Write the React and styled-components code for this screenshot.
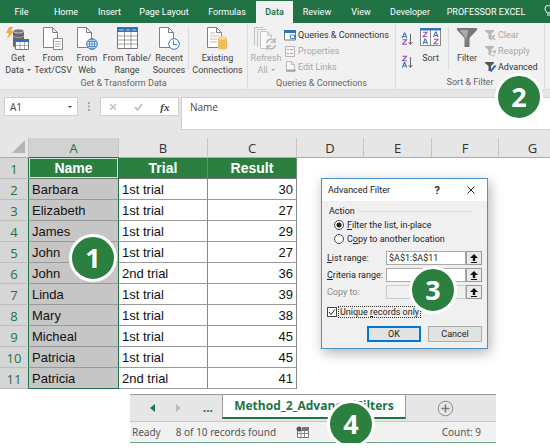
import React from "react";
import styled, { createGlobalStyle, css } from "styled-components";

const GlobalStyle = createGlobalStyle`
  * { box-sizing: border-box; }
  body { margin: 0; background: #fff; color: #444; font-family: Roboto, "Noto Sans", sans-serif; font-size: 9px; }
  button, input { font: inherit; color: inherit; margin: 0; }
  button { padding: 0; border: 0; background: none; }
`;

const Page = styled.main`
  overflow: hidden;
`;

/* Ribbon tabs */
const TabBar = styled.nav`
  display: flex;
  height: 23px;
  background: #217346;
  overflow: hidden;
`;
const RibbonTab = styled.button`
  flex: none;
  width: ${(p) => p.$w}px;
  margin-top: 1px;
  white-space: nowrap;
  color: ${(p) => (p.$active ? "#217346" : "#fff")};
  background: ${(p) => (p.$active ? "#f1f1f1" : "transparent")};
  font-weight: ${(p) => (p.$active ? 600 : 400)};
`;

/* Ribbon */
const Ribbon = styled.section`
  position: relative;
  display: flex;
  height: 67px;
  background: #f1f1f1;
  border-bottom: 1px solid #dadada;
`;
const Group = styled.div`
  flex: none;
  display: flex;
  flex-direction: column;
  width: ${(p) => p.$w}px;
  padding-top: 4px;
  border-right: 1px solid #dcdcdc;
`;
const GroupBody = styled.div`
  display: flex;
  height: 50px;
`;
const GroupLabel = styled.div`
  line-height: 14px;
  text-align: center;
  color: #666;
  white-space: nowrap;
`;
const BigButton = styled.button`
  flex: none;
  display: flex;
  flex-direction: column;
  align-items: center;
  width: ${(p) => p.$w}px;
  line-height: 12px;
  white-space: nowrap;
  color: ${(p) => (p.disabled ? "#a8a8a8" : "#444")};
  svg { display: block; margin-bottom: 1px; }
`;
const Divider = styled.div`
  flex: none;
  width: 1px;
  height: 43px;
  background: #dcdcdc;
`;
const SmallList = styled.div`
  display: flex;
  flex-direction: column;
`;
const SmallButton = styled.button`
  display: flex;
  align-items: center;
  gap: 2px;
  height: 16px;
  white-space: nowrap;
  color: ${(p) => (p.disabled ? "#a8a8a8" : "#333")};
`;
const IconButton = styled.button`
  height: 23px;
  padding-left: 6px;
  svg { display: block; }
`;
const Caret = styled.span`
  display: inline-block;
  margin-left: 3px;
  vertical-align: 2px;
  border: 2px solid transparent;
  border-top-color: currentColor;
  border-bottom: 0;
`;

/* Formula bar */
const FormulaBar = styled.section`
  display: flex;
  align-items: flex-start;
  height: 48px;
  padding: 7px 0 0 4px;
  background: #e6e6e6;
`;
const NameBox = styled.div`
  display: flex;
  align-items: center;
  justify-content: space-between;
  width: 74px;
  height: 19px;
  padding: 0 5px;
  background: #fff;
  border: 1px solid #d0d0d0;
  input { width: 40px; padding: 0; border: 0; font: 10px "Open Sans", sans-serif; outline: 0; }
`;
const Dots = styled.div`
  width: 22px;
  text-align: center;
  svg { margin-top: 5px; }
`;
const FxBox = styled.div`
  display: flex;
  align-items: center;
  justify-content: space-around;
  width: 79px;
  height: 19px;
  background: #fff;
  border: 1px solid #d0d0d0;
  svg { display: block; }
`;
const FxButton = styled.button`
  color: #444;
  font: italic bold 11px "Liberation Serif", serif;
`;
const FormulaInput = styled.input`
  flex: 1;
  min-width: 0;
  height: 33px;
  margin-left: 2px;
  padding: 0 8px 13px;
  border: 1px solid #d0d0d0;
  border-right: 0;
  background: #fff;
  font: 10px "Open Sans", sans-serif;
  outline: 0;
`;

/* Worksheet */
const Sheet = styled.section`
  position: relative;
`;
const Grid = styled.table`
  width: calc(100% + 17px);
  table-layout: fixed;
  border-collapse: separate;
  border-spacing: 0;
  color: #111;
  font: 13px "Liberation Sans", Arial, sans-serif;
`;
const ColHead = styled.th`
  height: 20px;
  padding: 1px 0 0;
  font: 13px/18px "Open Sans", "Noto Sans", sans-serif;
  color: ${(p) => (p.$selected ? "#217346" : "#333")};
  background: ${(p) => (p.$selected ? "#d2d2d2" : "#e6e6e6")};
  border-right: 1px solid #c4c4c4;
  border-bottom: 1px solid ${(p) => (p.$selected ? "#217346" : "#ababab")};
`;
const Corner = styled.td`
  padding: 0 3px 2px 0;
  background: #e6e6e6;
  border-right: 1px solid #c4c4c4;
  border-bottom: 1px solid #ababab;
  svg { display: block; margin-left: auto; }
`;
const RowHead = styled.th`
  height: 21px;
  padding: 2px 0 0;
  font: 13px/18px "Open Sans", "Noto Sans", sans-serif;
  color: #217346;
  background: #d6d6d6;
  border-right: 1px solid #217346;
  border-bottom: 1px solid #bdbdbd;
`;
const HeaderCell = styled.th`
  height: 21px;
  padding: 0;
  color: #fff;
  background: #2b8040;
  font-size: 14px;
  line-height: 18px;
  border-right: 1px solid ${(p) => (p.$selected ? "#217346" : "#6a8f72")};
  border-bottom: 1px solid #777;
  ${(p) => p.$selected && css`box-shadow: inset 0 0 0 1px #cfe3d4;`}
`;
const Cell = styled.td`
  height: 21px;
  padding: 2px 3px 0;
  line-height: 18px;
  white-space: nowrap;
  text-align: ${(p) => (p.$number ? "right" : "left")};
  background: ${(p) => (p.$selected ? "#c6c6c6" : "#fff")};
  border-right: 1px solid ${(p) => (p.$selected ? "#217346" : "#888")};
  border-bottom: 1px solid ${(p) => (p.$selected && p.$last ? "#217346" : "#999")};
`;

const Badge = styled.div`
  position: absolute;
  z-index: 3;
  left: ${(p) => p.$x}px;
  top: ${(p) => p.$y}px;
  width: 48px;
  height: 48px;
  border: 3px solid #fff;
  border-radius: 50%;
  background: #2b8040;
  color: #fff;
  font: bold 27px/42px "Open Sans", "Noto Sans", sans-serif;
  text-align: center;
`;

/* Dialog */
const Dialog = styled.form`
  position: absolute;
  z-index: 2;
  left: 321px;
  top: 40px;
  width: 167px;
  border: 1px solid #4a94cc;
  background: #f0f0f0;
  color: #222;
  font-size: 9px;
  box-shadow: 2px 4px 12px rgba(0, 0, 0, 0.3);
`;
const TitleBar = styled.header`
  display: flex;
  align-items: center;
  height: 22px;
  padding: 0 12px 0 6px;
  background: #fff;
  h2 { flex: 1; margin: 0; font-size: 9px; font-weight: 400; }
`;
const HelpButton = styled.button`
  margin-right: 27px;
  font-size: 11px;
  font-weight: 600;
`;
const CloseButton = styled.button`
  svg { display: block; }
`;
const DialogBody = styled.div`
  padding: 3px 5px 6px;
`;
const Fieldset = styled.fieldset`
  margin: 0 0 5px;
  padding: 0 0 0 7px;
  border: 0;
`;
const Legend = styled.legend`
  display: flex;
  align-items: center;
  gap: 4px;
  width: 100%;
  height: 14px;
  margin-left: -7px;
  &::after { content: ""; flex: 1; height: 1px; background: #dcdcdc; }
`;
const RadioLabel = styled.label`
  display: flex;
  align-items: center;
  gap: 3px;
  height: 14px;
  white-space: nowrap;
`;
const Radio = styled.input`
  appearance: none;
  flex: none;
  width: 10px;
  height: 10px;
  border: 1px solid #444;
  border-radius: 50%;
  background: #fff;
  &:checked { background: radial-gradient(circle, #222 0 2px, #fff 3px); }
`;
const FieldRow = styled.div`
  display: grid;
  grid-template-columns: 59px 1fr 16px;
  align-items: center;
  height: 14px;
  margin-bottom: 3px;
  color: ${(p) => (p.$muted ? "#888" : "inherit")};
  label { white-space: nowrap; }
`;
const RangeInput = styled.input`
  width: 100%;
  min-width: 0;
  height: 14px;
  padding: 0 2px;
  border: 1px solid #aaa;
  background: #fff;
  outline: 0;
  &:disabled { background: #f0f0f0; border-color: #ccc; }
`;
const PickButton = styled.button`
  display: grid;
  place-items: center;
  height: 14px;
  border: 1px solid #999;
  background: #eaeaea;
`;
const CheckRow = styled.div`
  display: flex;
  align-items: center;
  gap: 1px;
  margin-top: 7px;
  label { height: 12px; padding: 0 1px; border: 1px dotted #333; line-height: 10px; white-space: nowrap; }
`;
const Check = styled.span`
  display: grid;
  width: 10px;
  height: 10px;
  > * { grid-area: 1 / 1; }
  input { appearance: none; width: 10px; height: 10px; border: 1px solid #444; background: #fff; }
  svg { z-index: 1; pointer-events: none; }
`;
const DialogActions = styled.div`
  display: flex;
  justify-content: flex-end;
  gap: 7px;
  margin-top: 8px;
`;
const DialogButton = styled.button`
  width: 54px;
  height: 16px;
  border: ${(p) => (p.$primary ? "2px solid #0078d7" : "1px solid #adadad")};
  background: #e2e2e2;
  line-height: 10px;
`;

/* Bottom strip */
const Bottom = styled.footer`
  position: relative;
  margin: 5px 54px 0 130px;
  border-top: 1px solid #999;
  border-bottom: 1px solid #6fa587;
  color: #555;
  font-family: "Open Sans", "Noto Sans", sans-serif;
`;
const SheetTabs = styled.div`
  display: flex;
  height: 27px;
  background: #e6e6e6;
  border-bottom: 1px solid #c8c8c8;
`;
const TabNav = styled.div`
  display: flex;
  align-items: center;
  width: 92px;
  padding: 0 9px 0 20px;
  justify-content: space-between;
  color: #217346;
  button { font-size: 12px; font-weight: 700; line-height: 12px; }
  svg { display: block; }
`;
const SheetTab = styled.button`
  width: 184px;
  height: 24px;
  color: #217346;
  background: #fff;
  border: 1px solid #999;
  border-top: 0;
  border-bottom: 2px solid #217346;
  font-size: 12px;
  font-weight: 700;
  line-height: 18px;
  white-space: nowrap;
`;
const AddSheet = styled.button`
  margin-left: 31px;
  svg { display: block; }
`;
const StatusBar = styled.div`
  display: flex;
  align-items: center;
  height: 20px;
  padding: 0 15px 0 2px;
  background: #f1f1f1;
  font: 10px "Noto Sans", sans-serif;
  span + span { margin-left: 15px; }
  svg { margin-left: 20px; }
  span:last-child { margin-left: auto; }
`;

/* Icons */
const Doc = ({ x = 0, color = "#808080" }) => (
  <path d={`M${x + 0.5} .5h9l5 5v15h-14zM${x + 9.5} .5v5h5`} fill="#fff" stroke={color} />
);
const GetDataIcon = () => (
  <svg width="24" height="24" viewBox="0 0 24 24">
    <path d="M7 4v15c1 2 10 2 11 0V4z" fill="#666" />
    <ellipse cx="12.5" cy="4" rx="5.5" ry="2" fill="#777" stroke="#eee" strokeWidth=".7" />
    <path d="M7 9c2 2 9 2 11 0" fill="none" stroke="#bbb" strokeWidth=".7" />
    <path d="M3 0h4L5 4h3L1 12l2-6H0z" fill="#f0a840" />
    <path d="M9.5 12.5h13v10h-13z" fill="#fff" stroke="#777" />
    <path d="M9 12h14v3H9z" fill="#2f70bd" />
    <path d="M10 18.500h12M14 15v7M18.500 15v7" stroke="#999" strokeWidth=".8" />
  </svg>
);
const TextIcon = () => (
  <svg width="21" height="24" viewBox="0 0 21 24">
    <Doc />
    <path d="M10.500 11.500h9v11h-9z" fill="#fff" stroke="#888" />
    <path d="M12 14.500h6M12 17h6M12 19.500h5" stroke="#999" strokeWidth=".8" />
  </svg>
);
const WebIcon = () => (
  <svg width="21" height="24" viewBox="0 0 21 24">
    <Doc />
    <circle cx="15" cy="17" r="5.300" fill="#fff" stroke="#3a78bd" />
    <path d="M9.500 17h11M15 12v10M10.500 14.500h9M10.500 19.500h9" stroke="#3a78bd" strokeWidth=".8" />
    <ellipse cx="15" cy="17" rx="2.600" ry="5.300" fill="none" stroke="#3a78bd" strokeWidth=".8" />
  </svg>
);
const TableIcon = () => (
  <svg width="21" height="24" viewBox="0 0 21 24">
    <path d="M.5 1.500h20v20H.500z" fill="#fff" stroke="#777" />
    <path d="M0 0h21v5H0z" fill="#3273b8" />
    <path d="M2 3h5M9 3h4M15 3h4" stroke="#a9cbed" />
    <path d="M1 9h19M1 13h19M1 17h19M7.500 5v16M14 5v16" stroke="#888" strokeWidth=".8" />
  </svg>
);
const RecentIcon = () => (
  <svg width="21" height="24" viewBox="0 0 21 24">
    <Doc />
    <circle cx="15" cy="17" r="5.300" fill="#fff" stroke="#3a78bd" />
    <path d="M14.500 13.500v4h3.500" fill="none" stroke="#3a78bd" />
  </svg>
);
const ExistingIcon = () => (
  <svg width="21" height="24" viewBox="0 0 21 24">
    <Doc />
    <path d="M3 6h5M3 9h9M3 12h7M3 15h7" stroke="#aaa" strokeWidth=".8" />
    <path d="M11 11v10c1 2 8 2 9 0V11z" fill="#efbd5c" />
    <ellipse cx="15.500" cy="11" rx="4.500" ry="1.700" fill="#f7d795" />
  </svg>
);
const RefreshIcon = () => (
  <svg width="24" height="24" viewBox="0 0 24 24">
    <path d="M.5 18V.5h9M3.500 20V2.500h9" fill="none" stroke="#c4c4c4" />
    <path d="M6.500 4.500h7l4 4v13h-11zM13.500 4.500v4h4" fill="#fafafa" stroke="#c4c4c4" />
    <circle cx="17" cy="17" r="6" fill="#f1f1f1" />
    <path d="M12.500 16c1-4.500 6.500-5 8.500-1.500M21 11v4h-4M21.500 18c-1 4.500-6.500 5-8.500 1.500M13 23v-4h4" fill="none" stroke="#b8b8b8" strokeWidth="1.500" />
  </svg>
);
const QueriesIcon = () => (
  <svg width="12" height="11" viewBox="0 0 12 11">
    <path d="M.5.500h11v9.500H.5z" fill="#fff" stroke="#777" />
    <path d="M0 0h12v3H0z" fill="#3273b8" />
    <path d="M6.500 5h4v3.500h-4z" fill="none" stroke="#4884c4" />
  </svg>
);
const PropertiesIcon = () => (
  <svg width="12" height="11" viewBox="0 0 12 11">
    <path d="M1.500.500h9v10h-9z" fill="#f7f4f6" stroke="#b9b3b8" />
    <path d="M3 3.500h2M6 3.500h3M3 7.500h2M6 7.500h3" stroke="#a9a3a8" />
  </svg>
);
const LinksIcon = () => (
  <svg width="12" height="12" viewBox="0 0 12 12">
    <path d="M2.500.500h5l3 3v7h-8zM7.500.500v3h3" fill="#f6f6f6" stroke="#bbb" />
    <path d="M3 9.500h3M7 9.500h4" stroke="#aaa" strokeWidth="2" strokeLinecap="round" />
  </svg>
);
const A = ({ x, y, c = "#3477c2" }) => <path d={`M${x} ${y + 5}l2-5h.5l2 5M${x + 1} ${y + 3.5}h2.800`} fill="none" stroke={c} strokeWidth="1.100" />;
const Z = ({ x, y, c = "#9a4db3" }) => <path d={`M${x} ${y + 0.3}h4l-4 4.500h4.300`} fill="none" stroke={c} strokeWidth="1.100" />;
const SortSmall = ({ desc }) => (
  <svg width="11" height="14" viewBox="0 0 11 14">
    {desc ? <Z x={0.5} y={1} /> : <A x={0.3} y={1} />}
    {desc ? <A x={0.3} y={7.5} /> : <Z x={0.5} y={7.5} />}
    <path d="M8.500 2v10M6.500 10l2 2.500 2-2.500" fill="none" stroke="#666" />
  </svg>
);
const SortIcon = () => (
  <svg width="22" height="24" viewBox="0 0 22 24">
    <path d="M.5 2.500h20v16H.500z" fill="#fff" stroke="#888" />
    <path d="M0 1h21v2.500H0z" fill="#3273b8" />
    <path d="M10.500 3v15" stroke="#888" />
    <Z x={3} y={5} /><A x={3} y={12} /><A x={13.5} y={5} /><Z x={14} y={12} />
  </svg>
);
const FilterIcon = () => (
  <svg width="20" height="24" viewBox="0 0 20 24">
    <path d="M0 1h20v2l-7.500 8v9H7.500v-9L0 3z" fill="#777" />
    <path d="M2.500 3h9L9.500 11v7L8.700 11z" fill="#aaa" />
  </svg>
);
const MiniFilter = ({ kind }) => {
  const c = kind === "advanced" ? "#555" : "#b5b5b5";
  return (
    <svg width="11" height="12" viewBox="0 0 11 12">
      <path d="M0 1h9v1L6 5v5H3.500V5L0 2z" fill={c} />
      {kind === "clear" && <path d="M5.500 6l4.500 5M10 6l-4.500 5" stroke="#b5b5b5" strokeWidth="1.200" />}
      {kind === "reapply" && <path d="M10 7a2.500 2.500 0 1 0 .2 2.500M10.500 5v2.500H8" fill="#f1f1f1" stroke="#b5b5b5" />}
      {kind === "advanced" && <path d="M10.500 4.500l-5 6" stroke="#2f70c5" strokeWidth="2" />}
    </svg>
  );
};
const Bulb = () => (
  <svg width="9" height="12" viewBox="0 0 9 12">
    <path d="M3 8C3 6.500 1 6 1 3.800a3.500 3.500 0 0 1 7 0C8 6 6 6.500 6 8zM3 10h3" fill="none" stroke="#fff" />
  </svg>
);
const UpArrow = () => (
  <svg width="8" height="9" viewBox="0 0 8 9">
    <path d="M4 0l4 4H5.200v3H2.800V4H0zM1 8h6v1H1z" fill="#111" />
  </svg>
);

const tabs = [
  ["File", 43], ["Home", 46], ["Insert", 41], ["Page Layout", 68], ["Formulas", 58], ["Data", 37],
  ["Review", 48], ["View", 40], ["Developer", 58], ["PROFESSOR EXCEL", 94],
];
const rows = [
  ["Barbara", "1st trial", 30], ["Elizabeth", "1st trial", 27], ["James", "1st trial", 29],
  ["John", "1st trial", 27], ["John", "2nd trial", 36], ["Linda", "1st trial", 39],
  ["Mary", "1st trial", 38], ["Micheal", "1st trial", 45], ["Patricia", "1st trial", 45],
  ["Patricia", "2nd trial", 41],
];
const columnWidths = [29, 90, 89, 89, 67, 68, 67];

export default function App() {
  return (
    <Page>
      <GlobalStyle />
      <TabBar>
        {tabs.map(([name, w]) => (
          <RibbonTab key={name} $w={w} $active={name === "Data"}>{name}</RibbonTab>
        ))}
        <RibbonTab $w={30} aria-label="Tell me"><Bulb /></RibbonTab>
      </TabBar>

      <Ribbon>
        <Group $w={248}>
          <GroupBody>
            <BigButton $w={36}><GetDataIcon />Get<span>Data<Caret /></span></BigButton>
            <BigButton $w={34}><TextIcon />From<span>Text/CSV</span></BigButton>
            <BigButton $w={34}><WebIcon />From<span>Web</span></BigButton>
            <BigButton $w={46}><TableIcon />From Table/<span>Range</span></BigButton>
            <BigButton $w={38}><RecentIcon />Recent<span>Sources</span></BigButton>
            <Divider />
            <BigButton $w={57}><ExistingIcon />Existing<span>Connections</span></BigButton>
          </GroupBody>
          <GroupLabel>Get &amp; Transform Data</GroupLabel>
        </Group>
        <Group $w={148}>
          <GroupBody>
            <BigButton $w={36} disabled><RefreshIcon />Refresh<span>All<Caret /></span></BigButton>
            <SmallList>
              <SmallButton><QueriesIcon />Queries &amp; Connections</SmallButton>
              <SmallButton disabled><PropertiesIcon />Properties</SmallButton>
              <SmallButton disabled><LinksIcon />Edit Links</SmallButton>
            </SmallList>
          </GroupBody>
          <GroupLabel>Queries &amp; Connections</GroupLabel>
        </Group>
        <Group $w={149}>
          <GroupBody>
            <SmallList>
              <IconButton aria-label="Sort A to Z"><SortSmall /></IconButton>
              <IconButton aria-label="Sort Z to A"><SortSmall desc /></IconButton>
            </SmallList>
            <BigButton $w={35}><SortIcon />Sort</BigButton>
            <Divider />
            <BigButton $w={36}><FilterIcon />Filter</BigButton>
            <SmallList>
              <SmallButton disabled><MiniFilter kind="clear" />Clear</SmallButton>
              <SmallButton disabled><MiniFilter kind="reapply" />Reapply</SmallButton>
              <SmallButton><MiniFilter kind="advanced" />Advanced</SmallButton>
            </SmallList>
          </GroupBody>
          <GroupLabel>Sort &amp; Filter</GroupLabel>
        </Group>
        <Badge $x={495} $y={50}>2</Badge>
      </Ribbon>

      <FormulaBar>
        <NameBox>
          <input aria-label="Name box" defaultValue="A1" />
          <Caret />
        </NameBox>
        <Dots><svg width="3" height="9"><path d="M0 0h2v2H0zM0 3.500h2v2H0zM0 7h2v2H0z" fill="#aaa" /></svg></Dots>
        <FxBox>
          <button aria-label="Cancel entry"><svg width="8" height="8"><path d="M1 1l6 6M7 1L1 7" stroke="#bbb" strokeWidth="1.300" /></svg></button>
          <button aria-label="Confirm entry"><svg width="9" height="8"><path d="M1 4l2.500 3L8 1" fill="none" stroke="#bbb" strokeWidth="1.500" /></svg></button>
          <FxButton>fx</FxButton>
        </FxBox>
        <FormulaInput aria-label="Formula" defaultValue="Name" />
      </FormulaBar>

      <Sheet>
        <Grid>
          <colgroup>
            {columnWidths.map((w, i) => <col key={i} width={w} />)}
            <col />
          </colgroup>
          <thead>
            <tr>
              <Corner><svg width="13" height="13"><path d="M13 0v13H0z" fill="#b5b5b5" /></svg></Corner>
              {"ABCDEFG".split("").map((c) => <ColHead key={c} scope="col" $selected={c === "A"}>{c}</ColHead>)}
            </tr>
          </thead>
          <tbody>
            <tr>
              <RowHead scope="row">1</RowHead>
              <HeaderCell $selected>Name</HeaderCell>
              <HeaderCell>Trial</HeaderCell>
              <HeaderCell>Result</HeaderCell>
            </tr>
            {rows.map(([name, trial, result], i) => (
              <tr key={i}>
                <RowHead scope="row">{i + 2}</RowHead>
                <Cell $selected $last={i === rows.length - 1}>{name}</Cell>
                <Cell>{trial}</Cell>
                <Cell $number>{result}</Cell>
              </tr>
            ))}
          </tbody>
        </Grid>
        <Badge $x={69} $y={96}>1</Badge>

        <Dialog onSubmit={(e) => e.preventDefault()}>
          <TitleBar>
            <h2>Advanced Filter</h2>
            <HelpButton type="button">?</HelpButton>
            <CloseButton type="button" aria-label="Close"><svg width="8" height="8"><path d="M.5.500l7 7M7.500.500l-7 7" stroke="#222" /></svg></CloseButton>
          </TitleBar>
          <DialogBody>
            <Fieldset>
              <Legend>Action</Legend>
              <RadioLabel><Radio type="radio" name="action" defaultChecked /><span><u>F</u>ilter the list, in-place</span></RadioLabel>
              <RadioLabel><Radio type="radio" name="action" /><span>C<u>o</u>py to another location</span></RadioLabel>
            </Fieldset>
            <FieldRow>
              <label htmlFor="list"><u>L</u>ist range:</label>
              <RangeInput id="list" defaultValue="$A$1:$A$11" />
              <PickButton type="button" aria-label="Pick list range"><UpArrow /></PickButton>
            </FieldRow>
            <FieldRow>
              <label htmlFor="criteria"><u>C</u>riteria range:</label>
              <RangeInput id="criteria" />
              <PickButton type="button" aria-label="Pick criteria range"><UpArrow /></PickButton>
            </FieldRow>
            <FieldRow $muted>
              <label htmlFor="copy">Copy to:</label>
              <RangeInput id="copy" disabled />
              <PickButton type="button" aria-label="Pick copy range"><UpArrow /></PickButton>
            </FieldRow>
            <CheckRow>
              <Check>
                <input id="unique" type="checkbox" defaultChecked />
                <svg width="10" height="10"><path d="M2 5l2 2.500L8 2.500" fill="none" stroke="#222" /></svg>
              </Check>
              <label htmlFor="unique">Unique <u>r</u>ecords only</label>
            </CheckRow>
            <DialogActions>
              <DialogButton $primary type="submit">OK</DialogButton>
              <DialogButton type="button">Cancel</DialogButton>
            </DialogActions>
          </DialogBody>
          <Badge $x={87} $y={87}>3</Badge>
        </Dialog>
      </Sheet>

      <Bottom>
        <SheetTabs>
          <TabNav>
            <button aria-label="Previous sheet"><svg width="5" height="8"><path d="M5 0v8L0 4z" fill="#217346" /></svg></button>
            <button aria-label="Next sheet"><svg width="5" height="8"><path d="M0 0v8l5-4z" fill="#bbb" /></svg></button>
            <button>...</button>
          </TabNav>
          <SheetTab>Method_2_AdvancedFilters</SheetTab>
          <AddSheet aria-label="New sheet">
            <svg width="17" height="17"><circle cx="8.500" cy="8.500" r="7.300" fill="none" stroke="#888" /><path d="M8.500 4.500v8M4.500 8.500h8" stroke="#777" strokeWidth="1.500" /></svg>
          </AddSheet>
        </SheetTabs>
        <StatusBar>
          <span>Ready</span>
          <span>8 of 10 records found</span>
          <svg width="13" height="12">
            <path d="M1.500 4.500h11v7h-11z" fill="#fff" stroke="#777" />
            <path d="M6 1h7v3H6z" fill="#777" />
            <circle cx="3" cy="3" r="2.500" fill="#555" />
            <path d="M2 7.500h10M5 5v6M8.500 5v6" stroke="#888" />
          </svg>
          <span>Count: 9</span>
        </StatusBar>
        <Badge $x={197} $y={5}>4</Badge>
      </Bottom>
    </Page>
  );
}
